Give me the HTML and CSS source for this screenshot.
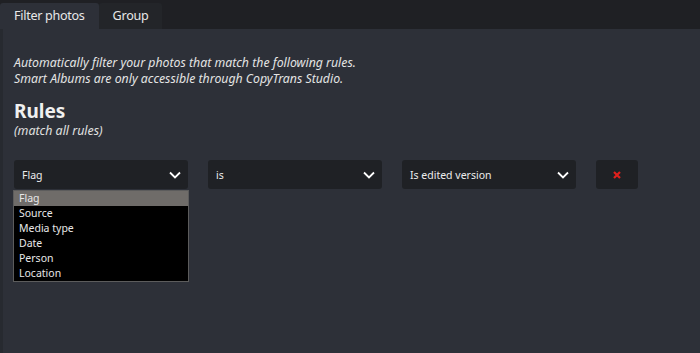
FILE: index.html
```html
<!DOCTYPE html>
<html lang="en">
<head>
    <meta charset="UTF-8">
    <meta name="viewport" content="width=device-width, initial-scale=1.0">
    <title>Smart Album</title>
    <link rel="stylesheet" href="styles.css">
</head>
<body>
    <div class="tabs">
        <div class="tab active">Filter photos</div>
        <div class="tab">Group</div>
    </div>
    <div class="panel">
        <p class="intro">Automatically filter your photos that match the following rules.<br>
        Smart Albums are only accessible through CopyTrans Studio.</p>
        <h1>Rules</h1>
        <p class="sub">(match all rules)</p>

        <div class="rule">
            <div class="select-wrap">
                <div class="select">
                    <span>Flag</span>
                    <svg class="chev" width="12" height="8" viewBox="0 0 12 8"><path d="M1 1.5 L6 6.5 L11 1.5" fill="none" stroke="#fff" stroke-width="1.8"/></svg>
                </div>
                <ul class="options">
                    <li class="selected">Flag</li>
                    <li>Source</li>
                    <li>Media type</li>
                    <li>Date</li>
                    <li>Person</li>
                    <li>Location</li>
                </ul>
            </div>
            <div class="select">
                <span>is</span>
                <svg class="chev" width="12" height="8" viewBox="0 0 12 8"><path d="M1 1.5 L6 6.5 L11 1.5" fill="none" stroke="#fff" stroke-width="1.8"/></svg>
            </div>
            <div class="select">
                <span>Is edited version</span>
                <svg class="chev" width="12" height="8" viewBox="0 0 12 8"><path d="M1 1.5 L6 6.5 L11 1.5" fill="none" stroke="#fff" stroke-width="1.8"/></svg>
            </div>
            <button class="remove">
                <svg width="8" height="8" viewBox="0 0 8 8"><path d="M1 1 L7 7 M7 1 L1 7" stroke="#e0201c" stroke-width="2.2"/></svg>
            </button>
        </div>
    </div>
</body>
</html>
```

FILE: styles.css
```css
body {
    margin: 0;
    height: 353px;
    display: flex;
    flex-direction: column;
    background-color: #1f2024;
    font-family: "Noto Sans", "Open Sans", sans-serif;
    color: #e6e6e6;
    overflow: hidden;
}
.tabs {
    display: flex;
    height: 29px;
    padding-top: 3px;
    box-sizing: border-box;
    background-color: #1f2024;
}
.tab {
    font-size: 12.6px;
    letter-spacing: -0.3px;
    padding: 0 14px;
    line-height: 26px;
    white-space: nowrap;
    background-color: #232529;
    border-radius: 3px 3px 0 0;
    color: #e8e8e8;
}
.tab.active {
    background-color: #2d3038;
}
.panel {
    flex: 1;
    background-color: #2d3038;
    border-left: 3px solid #272a30;
    padding: 0 11px;
}
.intro {
    margin: 26px 0 0;
    font-size: 12.3px;
    line-height: 16px;
    font-style: italic;
    color: #e4e4e4;
}
h1 {
    margin: 12px 0 0;
    font-size: 19px;
    line-height: 24px;
    font-weight: bold;
    color: #f0f0f0;
}
.sub {
    margin: 0;
    font-size: 12.4px;
    line-height: 16px;
    font-style: italic;
    color: #e0e0e0;
}
.rule {
    display: flex;
    gap: 20px;
    margin-top: 21px;
}
.select-wrap {
    position: relative;
}
.select {
    width: 174px;
    height: 29px;
    box-sizing: border-box;
    padding: 0 8px;
    display: flex;
    align-items: center;
    justify-content: space-between;
    background-color: #1f2125;
    border-radius: 3px;
    font-size: 10.5px;
    color: #ececec;
}
.chev {
    margin-right: -1px;
}
.options {
    position: absolute;
    top: 30px;
    left: -1px;
    width: 174px;
    margin: 0;
    padding: 0;
    list-style: none;
    background-color: #000;
    border: 1px solid #5c5c5c;
    font-size: 10.5px;
}
.options li {
    height: 15px;
    line-height: 15px;
    padding-left: 5px;
    color: #e8e8e8;
}
.options li.selected {
    background-color: #6f6c69;
}
.remove {
    width: 42px;
    height: 29px;
    border: none;
    border-radius: 3px;
    background-color: #1f2125;
    display: flex;
    align-items: center;
    justify-content: center;
    padding: 0;
}
```
